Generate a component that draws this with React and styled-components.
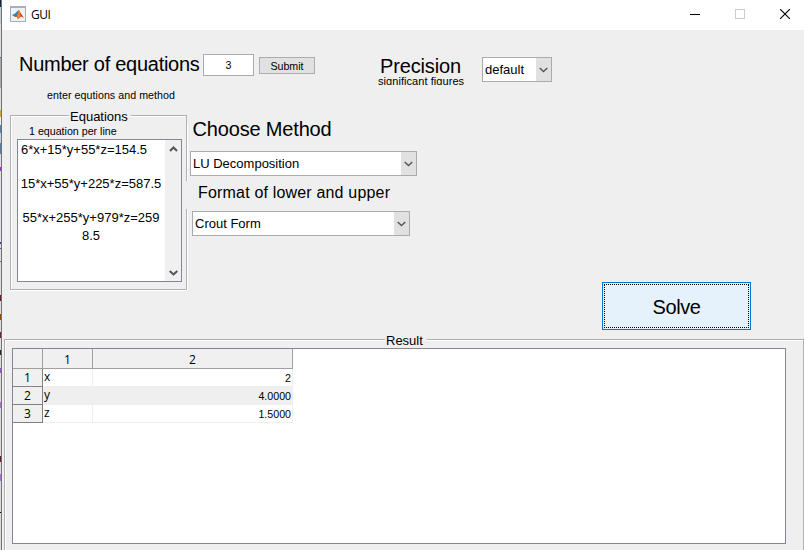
import React from "react";
import styled, { createGlobalStyle } from "styled-components";

const Global = createGlobalStyle`
  * { box-sizing: border-box; }
  body { margin: 0; overflow: hidden; background: #efefef; }
`;

const Screen = styled.div`
  display: flex;
  width: 804px;
  height: 550px;
  overflow: hidden;
  background: #efefef;
  color: #000;
  font: 13px/15px "Liberation Sans", Arial, sans-serif;
  white-space: nowrap;
`;

const DesktopEdge = styled.div`
  flex: none;
  display: flex;
  flex-direction: column;
  width: 2px;
  border-right: 1px solid #6f7378;
`;

const EdgeMark = styled.div`
  flex: none;
  height: ${(p) => p.$h}px;
  background: ${(p) => p.$c};
`;

const Window = styled.main`
  display: flex;
  flex-direction: column;
  width: 802px;
`;

const TitleBar = styled.header`
  display: flex;
  flex: none;
  height: 30px;
  background: #fff;
  padding: 6px 0 0 8px;
`;

const Title = styled.div`
  flex: 1;
  margin-left: 5px;
  font: 12px/17px "Open Sans", "Noto Sans", sans-serif;
  letter-spacing: -0.5px;
`;

const WindowControls = styled.div`
  display: flex;
  gap: 35px;
  margin: 3px 14px 0 0;
`;

const Toolbar = styled.section`
  display: flex;
  flex: none;
  height: 79px;
  padding-left: 17px;
`;

const CountGroup = styled.div`
  width: 359px;
  padding-top: 24px;
`;

const CountRow = styled.div`
  display: flex;
  height: 22px;
`;

const Heading = styled.div`
  font-size: 20px;
  line-height: 22px;
  letter-spacing: ${(p) => p.$spacing || 0}px;
`;

const CountLabel = styled(Heading)`
  width: 184px;
  margin-top: -1px;
`;

const CountInput = styled.div`
  width: 51px;
  height: 22px;
  border: 1px solid #ababab;
  background: #fff;
  font-size: 10.67px;
  line-height: 21px;
  text-align: center;
`;

const SubmitButton = styled.button`
  width: 56px;
  height: 17px;
  margin: 3px 0 0 5px;
  padding: 0;
  border: 1px solid #adadad;
  background: #e1e1e1;
  color: #000;
  font: 10.67px/16px "Liberation Sans", Arial, sans-serif;
`;

const Note = styled.div`
  margin: ${(p) => p.$margin};
  font-size: 10.67px;
  line-height: 13px;
  letter-spacing: ${(p) => p.$spacing || 0}px;
`;

const PrecisionGroup = styled.div`
  width: 104px;
  padding-top: 25px;
`;

const PrecisionHeading = styled(Heading)`
  padding-left: 2px;
`;

const ClippedNote = styled.div`
  height: 9px;
  margin-top: -1px;
  overflow: hidden;
  font-size: 11px;
  line-height: 11px;
  letter-spacing: 0.06px;
`;

const SelectBox = styled.div`
  display: flex;
  justify-content: space-between;
  width: ${(p) => p.$w}px;
  height: 25px;
  margin: ${(p) => p.$margin};
  padding-left: 2px;
  border: 1px solid #ababab;
  background: #fff;
  line-height: 23px;
`;

const SelectArrow = styled.div`
  display: flex;
  align-items: center;
  justify-content: center;
  width: 15px;
  background: #e1e1e1;
`;

const Middle = styled.section`
  display: flex;
  flex: none;
  height: 224px;
  padding-left: 8px;
`;

const EquationPanel = styled.div`
  width: 178px;
  height: 181px;
`;

const PanelTop = styled.div`
  display: flex;
  height: 15px;
`;

const PanelRule = styled.div`
  flex: ${(p) => p.$flex || "1"};
  height: 9px;
  margin: 6px ${(p) => p.$inset || 0}px 0 0;
  border: solid #b0b0b0;
  border-width: 1px ${(p) => (p.$right ? 1 : 0)}px 0 ${(p) => (p.$left ? 1 : 0)}px;
  box-shadow: inset ${(p) => (p.$left ? 1 : 0)}px 1px #fff;
`;

const Legend = styled.div`
  width: ${(p) => p.$w}px;
  padding-left: 1px;
  line-height: 15px;
`;

const EquationBody = styled.div`
  height: 166px;
  width: 177px;
  padding: 1px 0 0 6px;
  border: solid #b0b0b0;
  border-width: 0 1px 1px;
  box-shadow: inset 1px 0 #fff, 1px 0 #fff, 0 1px #fff;
`;

const EquationBox = styled.div`
  display: flex;
  width: 165px;
  height: 143px;
  margin-top: 1px;
  border: 1px solid #828790;
  background: #fff;
`;

const EquationText = styled.div`
  width: 147px;
  padding: 1px 1px 0 0;
  text-align: center;
`;

const EquationLine = styled.div`
  height: ${(p) => (p.$blank ? 16 : 18)}px;
  padding-right: ${(p) => p.$trail || 0}px;
  line-height: 18px;
`;

const ScrollBar = styled.div`
  display: flex;
  flex-direction: column;
  align-items: center;
  justify-content: space-between;
  width: 16px;
  padding: 6px 0 5px;
  background: #f0f0f0;
`;

const MethodColumn = styled.div`
  width: 414px;
  padding: 9px 0 0 2px;
`;

const MethodHeading = styled(Heading)`
  padding-left: 2.5px;
`;

const FormatLabel = styled.div`
  position: relative;
  width: 209px;
  height: 28px;
  margin: 5px 0 0 -5px;
  padding-left: 13px;
  background: #efefef;
  font-size: 16px;
  line-height: 23px;
  letter-spacing: 0.18px;
`;

const SolveButton = styled.button`
  width: 149px;
  height: 48px;
  margin-top: 173px;
  padding: 1px;
  border: 1px solid #0078d7;
  background: #e5f1fb;
  color: #000;
`;

const SolveFocus = styled.span`
  display: block;
  height: 44px;
  border: 1px dotted #000;
  font: 20px/45px "Liberation Sans", Arial, sans-serif;
  letter-spacing: -0.4px;
`;

const ResultPanel = styled.section`
  flex: 1;
  padding-left: 2px;
`;

const ResultBody = styled.div`
  height: 203px;
  padding-left: 7px;
  border: solid #b0b0b0;
  border-width: 0 1px;
  box-shadow: inset 1px 0 #fff;
`;

const TableView = styled.div`
  width: 774px;
  height: 196px;
  border: 1px solid #828790;
  background: #fff;
`;

const TableRow = styled.div`
  display: grid;
  grid-template-columns: 30px 50px 200px;
  grid-template-rows: ${(p) => (p.$head ? 20 : 18)}px;
  width: 280px;
  background: ${(p) => (p.$shade ? "#efefef" : "#fff")};
`;

const HeadCell = styled.div`
  border: solid #a0a0a0;
  border-width: 0 1px 1px 0;
  background: #f0f0f0;
  font: 12px/21px "Open Sans", "Noto Sans", sans-serif;
  text-align: center;
`;

const RowHead = styled(HeadCell)`
  border-color: #828282;
  line-height: 18px;
`;

const Cell = styled.div`
  border: solid #efefef;
  border-width: 0 1px 1px 0;
  padding: 0 1px;
`;

const NameCell = styled(Cell)`
  font: 12px/15px "Open Sans", "Noto Sans", sans-serif;
`;

const ValueCell = styled(Cell)`
  font-size: 10.67px;
  line-height: 18px;
  text-align: right;
`;

function MatlabIcon() {
  return (
    <svg width="16" height="16" viewBox="0 0 16 16">
      <rect x=".5" y=".5" width="15" height="15" fill="#eef2f5" stroke="#a7afb6" />
      <path d="M1 1.5h14" stroke="#9fb4c8" />
      <path d="M2 9l3-1.5L7.5 5 9 4 7 10.5 5 11z" fill="#387fae" />
      <path d="M5 11l2-1 2-6 1 2 4 6-3-1.5-3 2.5-1-2z" fill="#c74720" />
      <path d="M9 4l1 2 .3 5L8 13l-1-2.5z" fill="#ed812c" />
    </svg>
  );
}

function Chevron({ up, bold }) {
  return (
    <svg width="9" height="6" viewBox="0 0 9 6">
      <path
        d={up ? "M1 5l3.5-3.5L8 5" : "M.7 1l3.8 3.5L8.3 1"}
        fill="none"
        stroke="#555"
        strokeWidth={bold ? 2 : 1.4}
      />
    </svg>
  );
}

function Select({ label, w, margin }) {
  return (
    <SelectBox $w={w} $margin={margin}>
      {label}
      <SelectArrow><Chevron /></SelectArrow>
    </SelectBox>
  );
}

const edge = [
  [7, "#14283f"], [17, "#c8ccd0"], [33, "#dedede"], [1, "#2d80c0"], [30, "#a9a9a9"], [22, "#dedede"],
  [7, "#d9a13c"], [8, "#eee"], [8, "#5c7ca0"], [10, "#c8d0da"], [11, "#5c7ca0"], [13, "#ddd"],
  [4, "#a727cf"], [71, "#dfe0e2"], [2, "#6c27a6"], [4, "#ddd"], [1, "#8930c0"], [12, "#ddd"],
  [1, "#a040d0"], [33, "#ddd"], [6, "#6c1818"], [13, "#ddd"], [6, "#8a4b13"], [12, "#ddd"],
  [6, "#702020"], [12, "#ddd"], [5, "#252525"], [13, "#ddd"], [5, "#9a55c8"], [29, "#ddd"],
  [6, "#b56bcd"], [48, "#ddd"], [6, "#651d28"], [12, "#ddd"], [7, "#b56bcd"], [31, "#ddd"],
  [1, "#111"], [37, "#ddd"],
];

const equations = [
  { text: "6*x+15*y+55*z=154.5", trail: 14 },
  { text: "" },
  { text: "15*x+55*y+225*z=587.5" },
  { text: "" },
  { text: "55*x+255*y+979*z=259" },
  { text: "8.5" },
];
const results = [["x", "2"], ["y", "4.0000"], ["z", "1.5000"]];

export default function App() {
  return (
    <Screen>
      <Global />
      <DesktopEdge>
        {edge.map(([h, c], i) => <EdgeMark key={i} $h={h} $c={c} />)}
      </DesktopEdge>
      <Window>
        <TitleBar>
          <MatlabIcon />
          <Title>GUI</Title>
          <WindowControls>
            <svg width="10" height="10"><path d="M0 5.5h10" stroke="#000" /></svg>
            <svg width="10" height="10"><rect x=".5" y=".5" width="9" height="9" fill="none" stroke="#ccc" /></svg>
            <svg width="10" height="10"><path d="M0 0l10 10M10 0L0 10" stroke="#000" strokeWidth="1.1" /></svg>
          </WindowControls>
        </TitleBar>

        <Toolbar>
          <CountGroup>
            <CountRow>
              <CountLabel $spacing={-0.27}>Number of equations</CountLabel>
              <CountInput>3</CountInput>
              <SubmitButton>Submit</SubmitButton>
            </CountRow>
            <Note $margin="13px 0 0 28px" $spacing={0.05}>enter equtions and method</Note>
          </CountGroup>
          <PrecisionGroup>
            <PrecisionHeading $spacing={-0.15}>Precision</PrecisionHeading>
            <ClippedNote>significant figures</ClippedNote>
          </PrecisionGroup>
          <Select label="default" w={70} margin="27px 0 0" />
        </Toolbar>

        <Middle>
          <EquationPanel>
            <PanelTop>
              <PanelRule $left $flex="0 0 59px" />
              <Legend $w={62}>Equations</Legend>
              <PanelRule $right $inset={1} />
            </PanelTop>
            <EquationBody>
              <Note $margin="0 0 0 12px">1 equation per line</Note>
              <EquationBox>
                <EquationText>
                  {equations.map((line, i) => (
                    <EquationLine key={i} $blank={!line.text} $trail={line.trail}>{line.text}</EquationLine>
                  ))}
                </EquationText>
                <ScrollBar><Chevron up bold /><Chevron bold /></ScrollBar>
              </EquationBox>
            </EquationBody>
          </EquationPanel>
          <MethodColumn>
            <MethodHeading $spacing={-0.17}>Choose Method</MethodHeading>
            <Select label="LU Decomposition" w={227} margin="11px 0 0" />
            <FormatLabel>Format of lower and upper</FormatLabel>
            <Select label="Crout Form" w={218} margin="2px 0 0 2px" />
          </MethodColumn>
          <SolveButton><SolveFocus>Solve</SolveFocus></SolveButton>
        </Middle>

        <ResultPanel>
          <PanelTop>
            <PanelRule $left $flex="0 0 381px" />
            <Legend $w={42}>Result</Legend>
            <PanelRule $right />
          </PanelTop>
          <ResultBody>
            <TableView>
              <TableRow $head>
                <HeadCell /><HeadCell>1</HeadCell><HeadCell>2</HeadCell>
              </TableRow>
              {results.map(([name, value], i) => (
                <TableRow key={name} $shade={i === 1}>
                  <RowHead>{i + 1}</RowHead>
                  <NameCell>{name}</NameCell>
                  <ValueCell>{value}</ValueCell>
                </TableRow>
              ))}
            </TableView>
          </ResultBody>
        </ResultPanel>
      </Window>
    </Screen>
  );
}
